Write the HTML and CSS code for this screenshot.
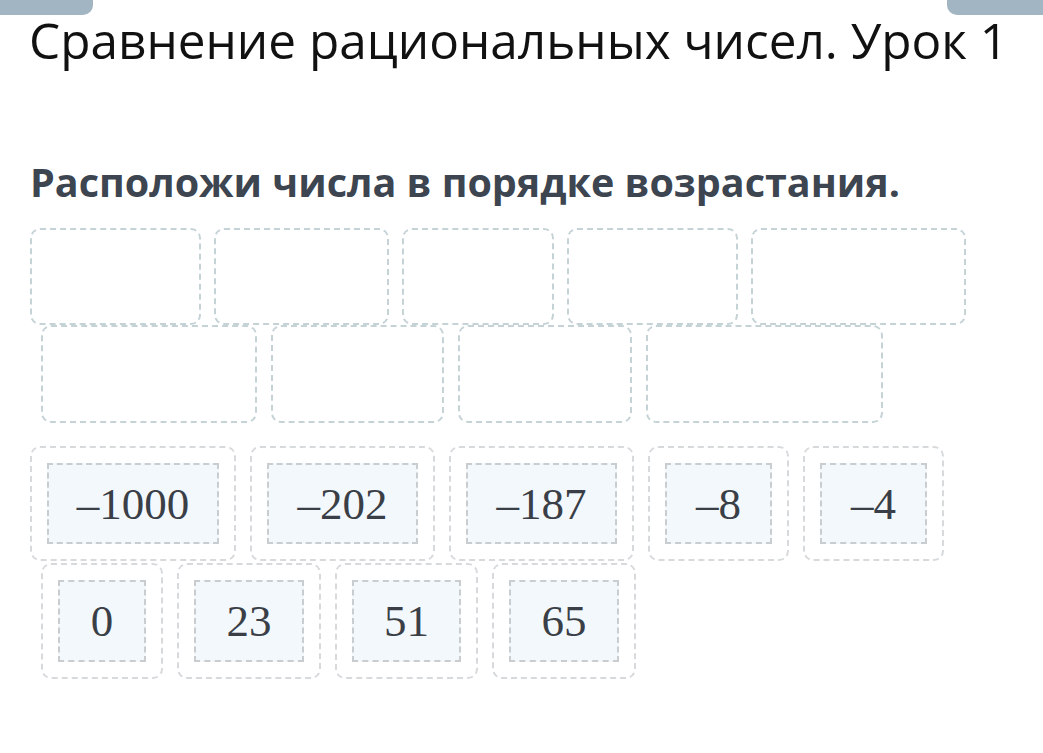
FILE: index.html
```html
<!DOCTYPE html>
<html lang="ru">
<head>
    <meta charset="UTF-8">
    <meta name="viewport" content="width=device-width, initial-scale=1.0">
    <title>Сравнение рациональных чисел. Урок 1</title>
    <link rel="stylesheet" href="styles.css">
</head>
<body>
    <div class="tabs">
        <div class="tab tab-left"></div>
        <div class="tab tab-right"></div>
    </div>
    <h1 class="title">Сравнение рациональных чисел. Урок 1</h1>
    <h2 class="task">Расположи числа в порядке возрастания.</h2>

    <div class="slots">
        <div class="row row-first">
            <div class="slot" style="width: 171px"></div>
            <div class="slot" style="width: 175px"></div>
            <div class="slot" style="width: 152px"></div>
            <div class="slot" style="width: 171px"></div>
            <div class="slot" style="width: 215px"></div>
        </div>
        <div class="row row-second">
            <div class="slot" style="width: 216px"></div>
            <div class="slot" style="width: 173px"></div>
            <div class="slot" style="width: 174px"></div>
            <div class="slot" style="width: 237px"></div>
        </div>
    </div>

    <div class="cards">
        <div class="row row-first">
            <div class="card" style="width: 206px"><span class="num">–1000</span></div>
            <div class="card" style="width: 185px"><span class="num">–202</span></div>
            <div class="card" style="width: 185px"><span class="num">–187</span></div>
            <div class="card" style="width: 141px"><span class="num">–8</span></div>
            <div class="card" style="width: 141px"><span class="num">–4</span></div>
        </div>
        <div class="row row-second">
            <div class="card" style="width: 122px"><span class="num">0</span></div>
            <div class="card" style="width: 144px"><span class="num">23</span></div>
            <div class="card" style="width: 143px"><span class="num">51</span></div>
            <div class="card" style="width: 144px"><span class="num">65</span></div>
        </div>
    </div>
</body>
</html>
```

FILE: styles.css
```css
body {
    margin: 0;
    background: #fff;
    font-family: "Open Sans", "Noto Sans", sans-serif;
    color: #111;
}
.tabs {
    display: flex;
    justify-content: space-between;
    height: 15px;
}
.tab {
    background: #a2b5c2;
    height: 15px;
}
.tab-left {
    width: 93px;
    border-radius: 0 0 10px 0;
}
.tab-right {
    width: 96px;
    border-radius: 0 0 0 10px;
}
.title {
    margin: 0 0 0 29px;
    font-size: 49.5px;
    font-weight: 400;
    line-height: 50px;
    color: #111;
}
.task {
    margin: 92px 0 0 30px;
    font-size: 39.5px;
    font-weight: 700;
    line-height: 50px;
    color: #3c4550;
}
.slots {
    margin-top: 21px;
}
.row {
    display: flex;
}
.slots .row {
    gap: 13px;
}
.row-first {
    padding-left: 30px;
}
.row-second {
    padding-left: 41px;
}
.slots .row-second {
    gap: 14px;
}
.slot {
    box-sizing: border-box;
    height: 97px;
    border: 2px dashed #c5d3d7;
    border-radius: 10px;
}
.slots .row-second .slot {
    height: 98px;
}
.cards {
    margin-top: 23px;
}
.cards .row {
    gap: 14px;
}
.cards .row-first {
    margin-bottom: 2px;
}
.card {
    box-sizing: border-box;
    height: 115px;
    padding: 15px;
    border: 2px dashed #d7dadc;
    border-radius: 10px;
    display: flex;
}
.num {
    flex: 1;
    display: flex;
    align-items: center;
    justify-content: center;
    background: #f3f8fc;
    border: 2px dashed #c9cdd0;
    font-family: "Liberation Serif", "DejaVu Serif", serif;
    font-size: 45px;
    color: #3a3f47;
}
.cards .row-second .card {
    height: 116px;
}
```
